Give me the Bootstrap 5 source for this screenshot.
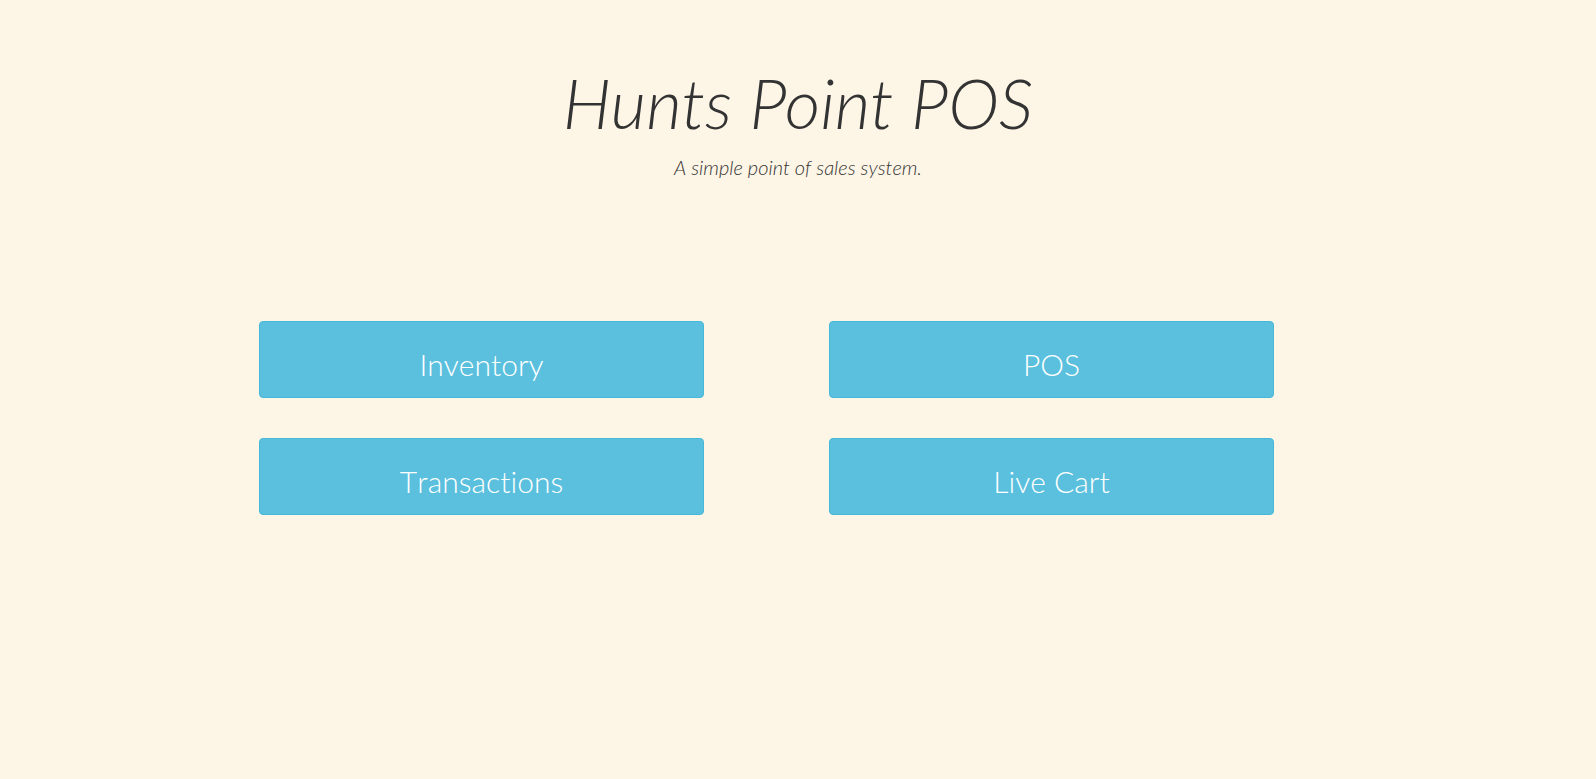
<!DOCTYPE html>
<html lang="en">
<head>
<meta charset="utf-8">
<meta name="viewport" content="width=device-width, initial-scale=1">
<title>Hunts Point POS</title>
<link href="https://cdn.jsdelivr.net/npm/bootstrap@5.3.0/dist/css/bootstrap.min.css" rel="stylesheet">
<style>
body { background: #fdf5e6; color: #333; font-family: Lato, sans-serif; font-weight: 300; font-variant-ligatures: none; font-kerning: none; }
.pos-shell { max-width: 1170px; padding: 0 15px; }
.pos-header { padding-top: 63px; margin-bottom: 138px; font-style: italic; }
.pos-title { font-size: 69px; line-height: 80px; font-weight: 300; font-kerning: normal; }
.pos-tagline { font-size: 20px; line-height: 32px; }
.pos-menu { --bs-gutter-x: 30px; row-gap: 40px; margin: 0 -16px 0 16px; }
.btn-pos {
  --bs-btn-color: #fff; --bs-btn-bg: #5bc0de; --bs-btn-border-color: #46b8da;
  --bs-btn-hover-color: #fff; --bs-btn-hover-bg: #31b0d5; --bs-btn-hover-border-color: #269abc;
  --bs-btn-border-radius: 4px; --bs-btn-font-size: 30px; --bs-btn-line-height: 42px;
  --bs-btn-font-weight: 300;
  padding-top: 21px; padding-bottom: 12px;
}
</style>
</head>
<body>
<div class="container pos-shell">
  <header class="pos-header text-center">
    <h1 class="pos-title mb-2">Hunts Point POS</h1>
    <p class="pos-tagline mb-0">A simple point of sales system.</p>
  </header>
  <main class="row pos-menu">
    <div class="col-5"><a href="#" class="btn btn-pos w-100">Inventory</a></div>
    <div class="col-5 offset-1"><a href="#" class="btn btn-pos w-100">POS</a></div>
    <div class="col-5"><a href="#" class="btn btn-pos w-100">Transactions</a></div>
    <div class="col-5 offset-1"><a href="#" class="btn btn-pos w-100">Live Cart</a></div>
  </main>
</div>
<script src="https://cdn.jsdelivr.net/npm/bootstrap@5.3.0/dist/js/bootstrap.bundle.min.js"></script>
</body>
</html>
